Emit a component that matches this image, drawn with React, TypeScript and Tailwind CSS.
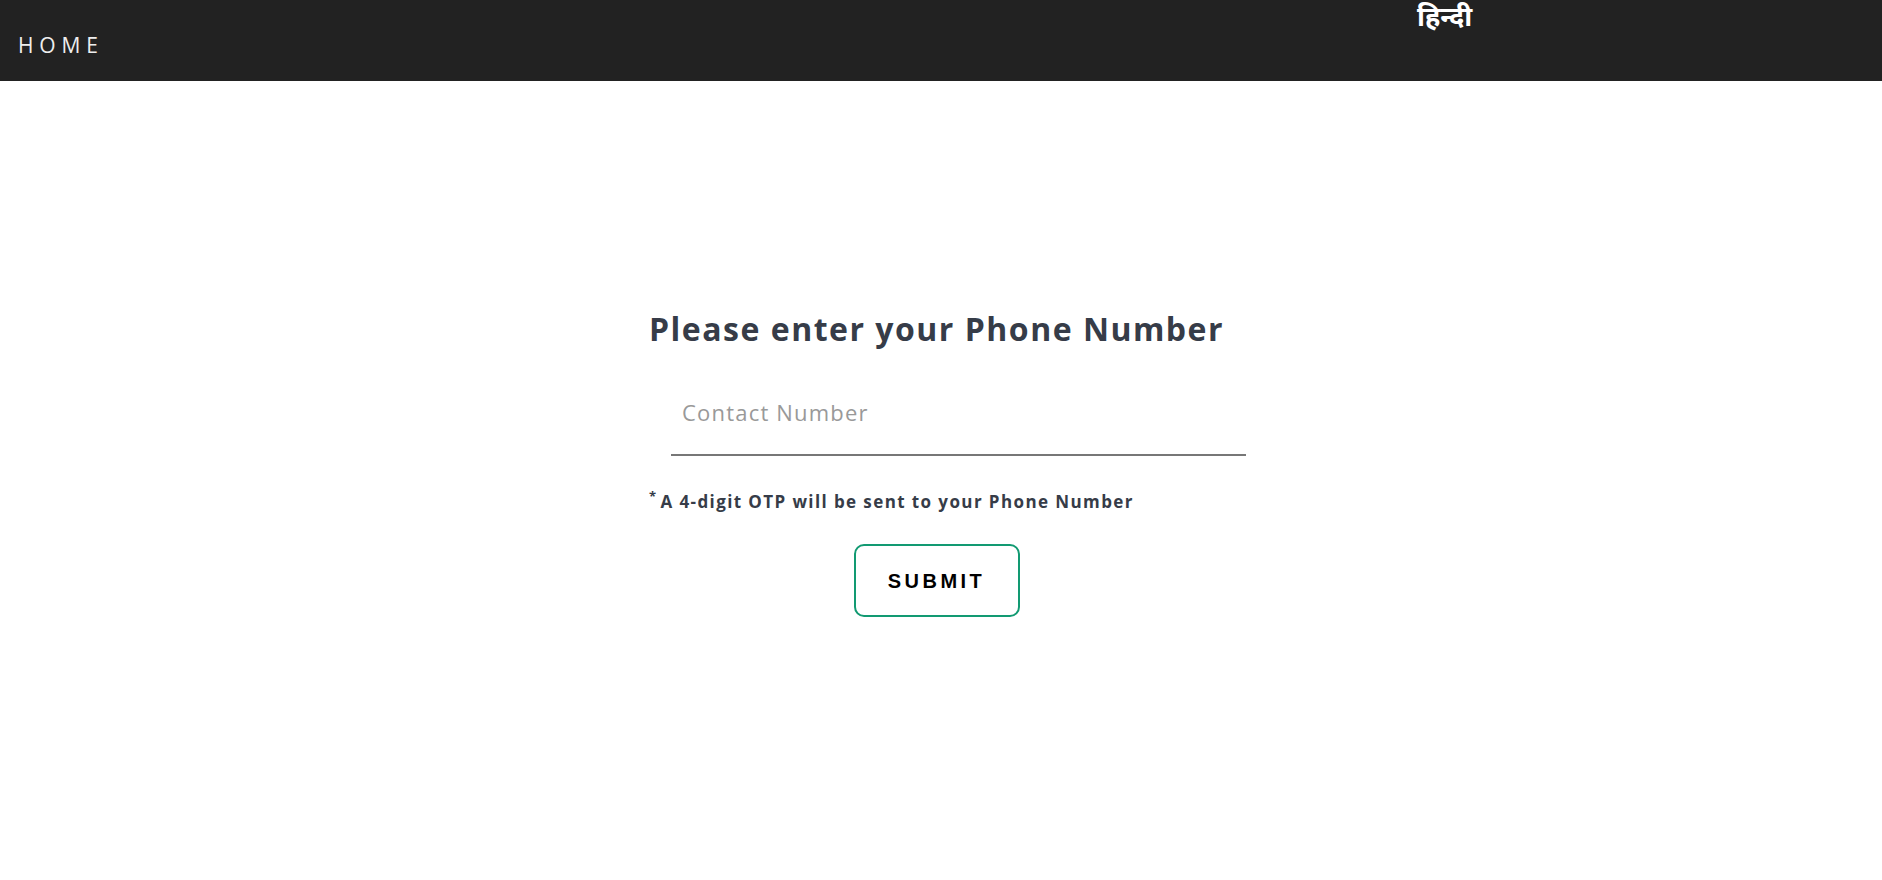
import React from "react";

export default function App() {
  return (
    <div className="min-h-[880px] w-full bg-white" style={{ fontFamily: '"Open Sans", sans-serif' }}>
      <header className="relative h-[81px] w-full bg-[#222222]">
        <div className="absolute left-[18px] top-[32px] text-[21px] leading-[26px] tracking-[0.28em] text-[#eeeeee]" style={{ fontFamily: '"Open Sans", sans-serif' }}>
          HOME
        </div>
        <div className="absolute left-[1417px] top-[0px] text-[27px] font-bold leading-[32px] text-white" style={{ fontFamily: '"Noto Sans", "Noto Sans Devanagari", sans-serif' }}>
          हिन्दी
        </div>
      </header>
      <main className="flex justify-center pr-[9px] pt-[228px]">
        <div className="flex w-[575px] flex-col">
          <h1 className="whitespace-nowrap text-[32px] font-bold leading-[40px] tracking-[1.5px] text-[#363c48]">Please enter your Phone Number</h1>
          <div className="ml-[22px] mt-[49px] w-[575px] border-b-2 border-[#777777] pb-[27px] pl-[11px]">
            <input
              className="w-full bg-transparent text-[22px] leading-[28px] tracking-[1.2px] text-[#333] outline-none placeholder:text-[#999999]"
              placeholder="Contact Number"
            />
          </div>
          <p className="mt-[35px] flex whitespace-nowrap text-[17px] font-bold leading-[22px] tracking-[1.4px] text-[#363c48]">
            <span className="mr-[3px] -mt-[6px] text-[13px]">*</span>
            <span>A 4-digit OTP will be sent to your Phone Number</span>
          </p>
          <div className="mt-[31px] flex justify-center">
            <button
              className="flex h-[73px] w-[166px] items-center justify-center rounded-[10px] border-2 border-[#129a72] bg-white text-[20px] font-bold tracking-[3.5px] text-black"
              style={{ fontFamily: '"Liberation Sans", Arial, sans-serif' }}
            >
              SUBMIT
            </button>
          </div>
        </div>
      </main>
    </div>
  );
}
